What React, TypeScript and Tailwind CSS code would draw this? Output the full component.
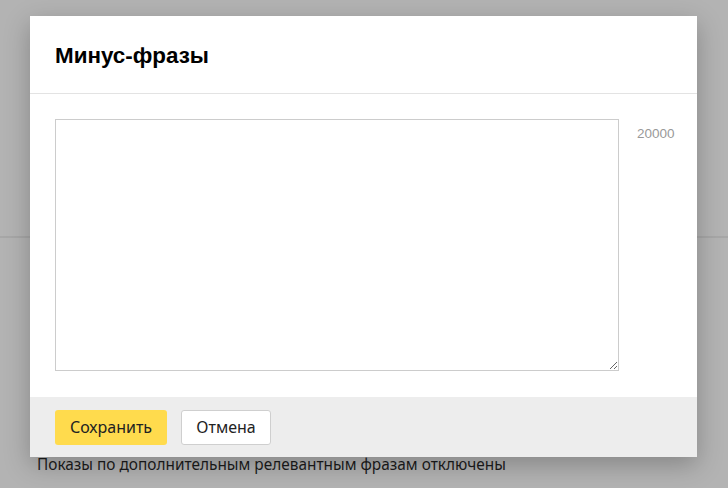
import React from 'react';

const sans = { fontFamily: '"Noto Sans", "Open Sans", sans-serif' };
const arial = { fontFamily: '"Liberation Sans", Arial, sans-serif' };

const App = () => {
  return (
    <div className="relative w-[728px] h-[488px] overflow-hidden bg-[#b3b3b3]" style={sans}>
      {/* Page underneath the overlay */}
      <div className="pt-[236px]">
        <div className="h-[2px] bg-[#a7a7a7]"></div>
        <p className="mt-[217px] pl-[37px] text-[15.4px] leading-5 text-[#1c1c1c]">
          Показы по дополнительным релевантным фразам отключены
        </p>
      </div>

      {/* Modal */}
      <div className="absolute left-[30px] top-[16px] w-[667px] bg-white shadow-[0_8px_24px_rgba(0,0,0,0.25)]">
        <div className="h-[78px] flex items-center px-[25px] border-b border-[#e3e3e3]">
          <h1 className="text-[22.4px] font-bold text-black pt-[2px]" style={arial}>
            Минус-фразы
          </h1>
        </div>

        <div className="flex pl-[25px] pt-[25px] pb-[26px]">
          <textarea className="w-[564px] h-[252px] border border-[#cccccc] outline-none resize p-2 block"></textarea>
          <span className="ml-[18px] mt-[5px] text-[13.5px] text-[#999999]" style={arial}>
            20000
          </span>
        </div>

        <div className="h-[60px] bg-[#ededed] flex items-center gap-[14px] px-[25px]">
          <button className="h-[35px] w-[112px] rounded-[3px] bg-[#ffdb4d] text-[16px] text-[#222]">
            Сохранить
          </button>
          <button className="h-[35px] w-[90px] rounded-[3px] bg-white border border-[#cfcfcf] text-[16px] text-[#222]">
            Отмена
          </button>
        </div>
      </div>
    </div>
  );
};

export default App;
